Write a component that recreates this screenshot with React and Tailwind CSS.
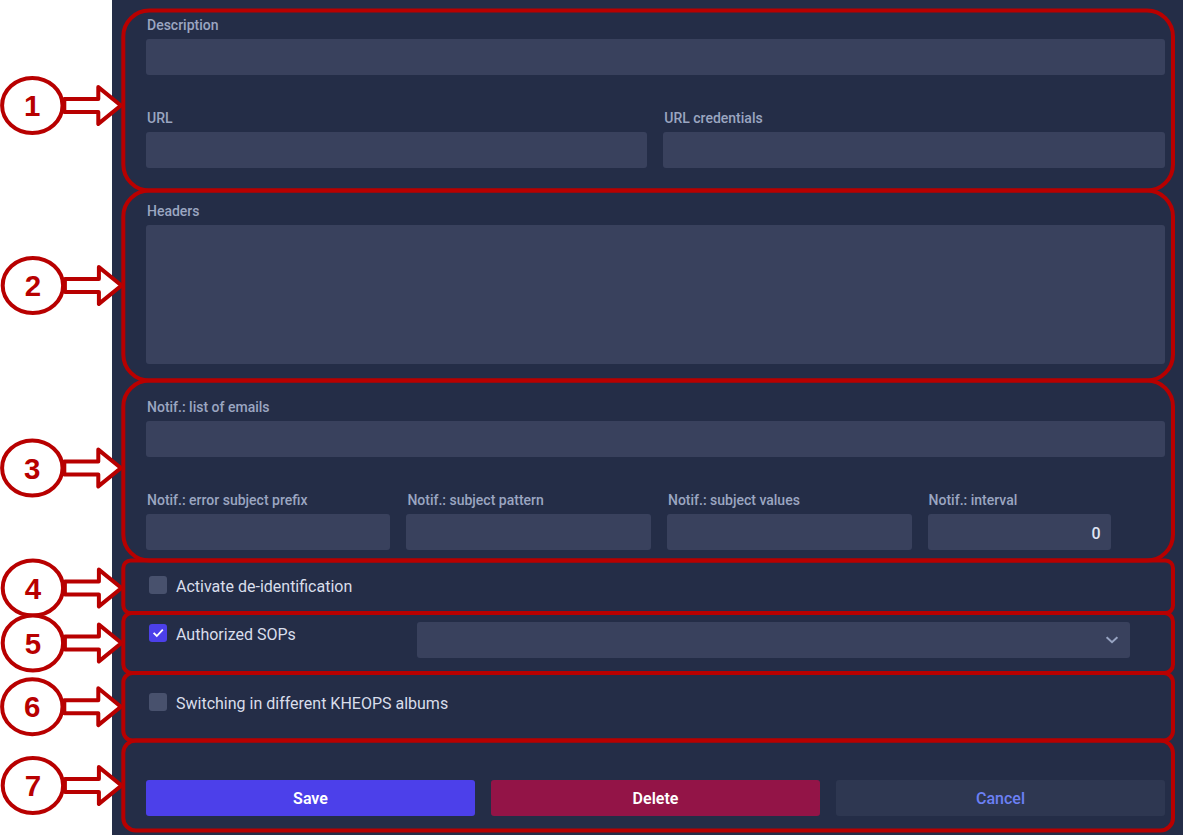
const callouts = [
  { n: 1, cx: 32.3, cy: 105.5, top: 10.5, bottom: 190.5, r: 26 },
  { n: 2, cx: 32.9, cy: 285.5, top: 190.5, bottom: 380.5, r: 26 },
  { n: 3, cx: 32.3, cy: 468, top: 380.5, bottom: 560.5, r: 26 },
  { n: 4, cx: 32.9, cy: 588, top: 560.5, bottom: 613, r: 7.5 },
  { n: 5, cx: 32.9, cy: 643, top: 613, bottom: 673, r: 8.5 },
  { n: 6, cx: 32.3, cy: 706.7, top: 673, bottom: 740.5, r: 9.5 },
  { n: 7, cx: 32.9, cy: 785.5, top: 740.5, bottom: 830.4, r: 12.5 },
];

function Callouts() {
  return (
    <svg
      className="pointer-events-none absolute top-0 left-0"
      width="1184"
      height="836"
      viewBox="0 0 1184 836"
      stroke="#b80000"
      strokeWidth="4"
      strokeLinejoin="round"
    >
      {callouts.map((c) => (
        <g key={c.n}>
          <rect x="123.3" y={c.top} width="1049.7" height={c.bottom - c.top} rx={c.r} fill="none" />
          <ellipse cx={c.cx} cy={c.cy} rx="30.2" ry="27.5" fill="#fff" />
          <path
            transform={`translate(${c.cx} ${c.cy})`}
            d="M32 -6.5H66V-18.4L88.6 0L66 18.4V6.5H32Z"
            fill="#fff"
          />
          <text
            x={c.cx}
            y={c.cy + 10.6}
            textAnchor="middle"
            stroke="none"
            fill="#b80000"
            className="font-['Liberation_Sans',sans-serif] text-[29.5px] font-bold"
          >
            {c.n}
          </text>
        </g>
      ))}
    </svg>
  );
}

function Field({ label, className = "", inputClass = "h-9", value }) {
  return (
    <div className={`flex flex-col gap-1 ${className}`}>
      <label className="pl-px text-sm leading-5 font-medium whitespace-nowrap text-[#9ba6c1]">{label}</label>
      <div
        className={`flex items-center justify-end rounded-[3px] bg-[#39415d] px-2.5 pt-[3px] font-medium text-[#dfe4f2] ${inputClass}`}
      >
        {value}
      </div>
    </div>
  );
}

function Check({ label, checked = false }) {
  return (
    <div className="flex items-start gap-[9px] pl-[3px]">
      <span
        className={`flex size-[18px] items-center justify-center rounded-[3px] ${checked ? "bg-[#4c40ea]" : "bg-[#48516d]"}`}
      >
        {checked && (
          <svg width="18" height="18" viewBox="0 0 18 18" fill="none" stroke="#fff" strokeWidth="1.8">
            <path d="M4.6 8.8L7.8 12L13.8 5.7" />
          </svg>
        )}
      </span>
      <span className="pt-px leading-5 text-[#d9deeb]">{label}</span>
    </div>
  );
}

export default function App() {
  return (
    <div className="relative h-[836px] w-[1184px] overflow-hidden bg-white pl-28 font-[Roboto,sans-serif] text-base">
      <form className="flex h-[835px] w-[1071px] flex-col bg-[#242d47] pt-[15px] pr-[18px] pl-[34px]">
        <div className="flex flex-col gap-[33px]">
          <Field label="Description" />
          <div className="flex gap-4">
            <Field label="URL" className="w-[501.3px]" />
            <Field label="URL credentials" className="flex-1" />
          </div>
          <Field label="Headers" inputClass="h-[139px]" />
          <Field label="Notif.: list of emails" />
          <div className="flex gap-4">
            <Field label="Notif.: error subject prefix" className="w-[244.4px]" />
            <Field label="Notif.: subject pattern" className="w-[244.6px]" />
            <Field label="Notif.: subject values" className="w-[244.6px]" />
            <Field label="Notif.: interval" className="w-[183px]" value="0" />
          </div>
        </div>
        <div className="mt-[26px] h-[46px]">
          <Check label="Activate de-identification" />
        </div>
        <div className="flex h-[71px] items-start">
          <div className="w-[271px] pt-0.5">
            <Check label="Authorized SOPs" checked />
          </div>
          <div className="flex h-9 w-[713px] items-center justify-end rounded-[3px] bg-[#39415d] pr-3">
            <svg width="12" height="8" viewBox="0 0 12 8" fill="none" stroke="#98a4c2" strokeWidth="2">
              <path d="M0.6 1.2L6 6.2L11.4 1.2" />
            </svg>
          </div>
        </div>
        <Check label="Switching in different KHEOPS albums" />
        <div className="mt-auto mb-[19px] grid h-9 grid-cols-3 gap-4">
          <button type="button" className="rounded-[3px] bg-[#4c40ea] pt-0.5 font-semibold text-white">
            Save
          </button>
          <button type="button" className="rounded-[3px] bg-[#931447] pt-0.5 font-semibold text-white">
            Delete
          </button>
          <button type="button" className="rounded-[3px] bg-[#2e3751] pt-0.5 font-medium text-[#6c80f5]">
            Cancel
          </button>
        </div>
      </form>
      <Callouts />
    </div>
  );
}
